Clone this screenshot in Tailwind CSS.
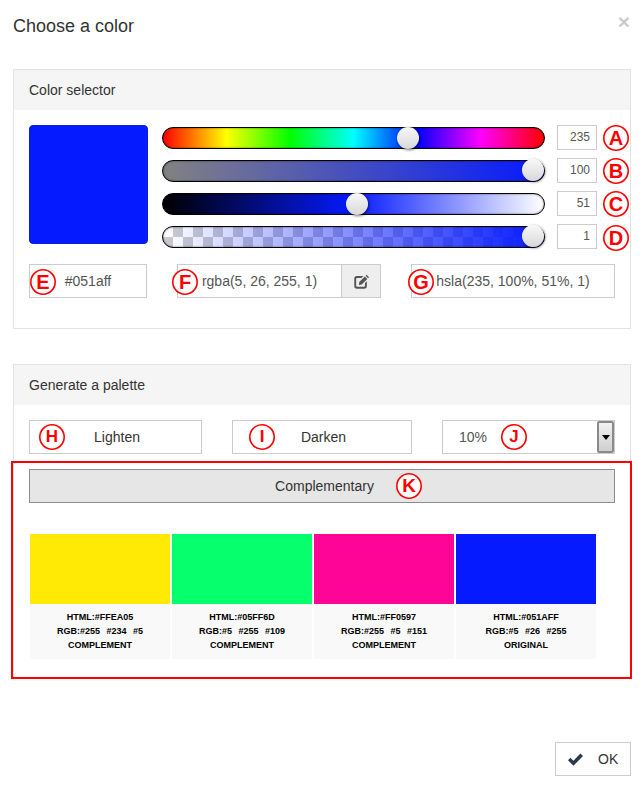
<!DOCTYPE html>
<html lang="en">
<head>
    <meta charset="UTF-8">
    <meta name="viewport" content="width=device-width, initial-scale=1.0">
    <title>Choose a color</title>
    <script src="https://cdn.jsdelivr.net/npm/@tailwindcss/browser@4"></script>
</head>
<body class="bg-white">
    <div class="relative w-[643px] h-[790px] overflow-hidden font-['Liberation_Sans',Arial,sans-serif] text-sm text-[#333]">
        <!-- Modal header -->
        <div class="h-[69px] pl-[13px] pr-[12px] flex items-start justify-between">
            <h1 class="text-lg leading-[20px] mt-[16px]">Choose a color</h1>
            <span class="text-[21px] leading-[21px] font-bold text-[#ccc] mt-[11px] mr-[1px]">×</span>
        </div>

        <!-- Color selector panel -->
        <div class="ml-[13px] w-[618px] border border-[#e3e3e3]">
            <div class="h-[40px] bg-[#f5f5f5] pl-[15px] flex items-center">Color selector</div>
            <div class="p-[15px] pb-[30px]">
                <div class="flex h-[124px]">
                    <div class="w-[119px] h-[119px] rounded bg-[#051aff] border border-[#0a1fd8]"></div>
                    <div class="ml-[14px] flex flex-col gap-2">
                        <div class="flex h-[25px]">
                            <div class="relative mt-[2px] w-[383px] h-[22px] rounded-full border border-black shadow-[inset_0_0_2px_rgba(0,0,0,0.6)] bg-[linear-gradient(to_right,#f00,#ff0,#0f0,#0ff,#00f,#f0f,#f00)]">
                                <div class="absolute left-[234px] top-[-1px] size-[22px] rounded-full bg-gradient-to-b from-[#f8f8f8] to-[#d8d8d8] shadow-[1px_1px_3px_rgba(0,0,0,0.55)]"></div>
                            </div>
                            <div class="ml-[12px] w-[40px] h-[25px] border border-[#ccc] text-xs text-[#555] text-right pr-[6px] leading-[23px]">235</div>
                        </div>
                        <div class="flex h-[25px]">
                            <div class="relative mt-[2px] w-[383px] h-[22px] rounded-full border border-black shadow-[inset_0_0_2px_rgba(0,0,0,0.6)] bg-[linear-gradient(to_right,#828282,#051aff)]">
                                <div class="absolute left-[359px] top-[-2px] size-[22px] rounded-full bg-gradient-to-b from-[#f8f8f8] to-[#d8d8d8] shadow-[1px_1px_3px_rgba(0,0,0,0.55)]"></div>
                            </div>
                            <div class="ml-[12px] w-[40px] h-[25px] border border-[#ccc] text-xs text-[#555] text-right pr-[6px] leading-[23px]">100</div>
                        </div>
                        <div class="flex h-[25px]">
                            <div class="relative mt-[2px] w-[383px] h-[22px] rounded-full border border-black shadow-[inset_0_0_2px_rgba(0,0,0,0.6)] bg-[linear-gradient(to_right,#000,#051aff_50%,#fff)]">
                                <div class="absolute left-[183px] top-[-1px] size-[22px] rounded-full bg-gradient-to-b from-[#f8f8f8] to-[#d8d8d8] shadow-[1px_1px_3px_rgba(0,0,0,0.55)]"></div>
                            </div>
                            <div class="ml-[12px] w-[40px] h-[25px] border border-[#ccc] text-xs text-[#555] text-right pr-[6px] leading-[23px]">51</div>
                        </div>
                        <div class="flex h-[25px]">
                            <div class="relative mt-[2px] w-[383px] h-[22px] rounded-full border border-black bg-[conic-gradient(#ccc_25%,#fff_0_50%,#ccc_0_75%,#fff_0)] bg-[length:20px_20px]">
                                <div class="h-full rounded-full shadow-[inset_0_0_2px_rgba(0,0,0,0.6)] bg-[linear-gradient(to_right,transparent,#051aff)]"></div>
                                <div class="absolute left-[359px] top-[-2px] size-[22px] rounded-full bg-gradient-to-b from-[#f8f8f8] to-[#d8d8d8] shadow-[1px_1px_3px_rgba(0,0,0,0.55)]"></div>
                            </div>
                            <div class="ml-[12px] w-[40px] h-[25px] border border-[#ccc] text-xs text-[#555] text-right pr-[6px] leading-[23px]">1</div>
                        </div>
                    </div>
                </div>
                <div class="mt-[15px] flex gap-[30px] text-[#555]">
                    <div class="w-[118px] h-[34px] border border-[#ccc] flex items-center justify-center">#051aff</div>
                    <div class="flex">
                        <div class="w-[165px] h-[34px] border border-[#ccc] flex items-center justify-center">rgba(5, 26, 255, 1)</div>
                        <div class="w-[39px] h-[34px] border border-l-0 border-[#ccc] bg-[#eee] flex items-center justify-center">
                            <svg class="size-[15px]" viewBox="0 0 16 16" fill="#555">
                                <path d="M3.2 2.2H10L8 4.2H3.4a1.1 1.1 0 0 0-1.1 1.1v7.2a1.1 1.1 0 0 0 1.1 1.1h7.2a1.1 1.1 0 0 0 1.1-1.1V9.6l2-2v5.2A3 3 0 0 1 10.8 15.8H3.2A3 3 0 0 1 .3 12.8V5.2a3 3 0 0 1 2.9-3z"/>
                                <path d="M5.6 8.6 11.6 2.6 14.2 5.2 8.2 11.2 5.2 11.8zM12.4 1.8 13.4.8 16 3.4 15 4.4z"/>
                            </svg>
                        </div>
                    </div>
                    <div class="w-[204px] h-[34px] border border-[#ccc] flex items-center justify-center">hsla(235, 100%, 51%, 1)</div>
                </div>
            </div>
        </div>

        <!-- Generate a palette panel -->
        <div class="mt-[35px] ml-[13px] w-[618px] border border-[#e3e3e3]">
            <div class="h-[40px] bg-[#f5f5f5] pl-[15px] flex items-center">Generate a palette</div>
            <div class="pt-[15px] px-[15px] pb-[18px]">
                <div class="flex gap-[30px]">
                    <div class="w-[173px] h-[34px] border border-[#ccc] pl-[3px] flex items-center justify-center">Lighten</div>
                    <div class="w-[180px] h-[34px] border border-[#ccc] pl-[3px] flex items-center justify-center">Darken</div>
                    <div class="w-[173px] h-[34px] border border-[#ccc] pl-[16px] flex items-center justify-between text-[#555]">
                        10%
                        <div class="w-[17px] h-[32px] border-2 border-[#8a8a8a] rounded-[2px] bg-gradient-to-b from-[#f2f2f2] to-[#cfcfcf] flex items-center justify-center">
                            <div class="w-0 h-0 border-x-[4px] border-x-transparent border-t-[5px] border-t-black"></div>
                        </div>
                    </div>
                </div>
                <div class="mt-[15px] h-[34px] bg-[#e6e6e6] border border-[#8c8c8c] pl-[5px] flex items-center justify-center">Complementary</div>
                <div class="mt-[31px] ml-[1px] flex gap-[2px] text-[9px] leading-[14px] font-bold text-black text-center [word-spacing:0.7px]">
                    <div class="w-[140px] bg-[#f9f9f9]">
                        <div class="h-[70px] bg-[#ffea05]"></div>
                        <div class="pt-[6px] pb-[7px]">HTML:#FFEA05<br>RGB:#255&nbsp; #234&nbsp; #5<br>COMPLEMENT</div>
                    </div>
                    <div class="w-[140px] bg-[#f9f9f9]">
                        <div class="h-[70px] bg-[#05ff6d]"></div>
                        <div class="pt-[6px] pb-[7px]">HTML:#05FF6D<br>RGB:#5&nbsp; #255&nbsp; #109<br>COMPLEMENT</div>
                    </div>
                    <div class="w-[140px] bg-[#f9f9f9]">
                        <div class="h-[70px] bg-[#ff0597]"></div>
                        <div class="pt-[6px] pb-[7px]">HTML:#FF0597<br>RGB:#255&nbsp; #5&nbsp; #151<br>COMPLEMENT</div>
                    </div>
                    <div class="w-[140px] bg-[#f9f9f9]">
                        <div class="h-[70px] bg-[#051aff]"></div>
                        <div class="pt-[6px] pb-[7px]">HTML:#051AFF<br>RGB:#5&nbsp; #26&nbsp; #255<br>ORIGINAL</div>
                    </div>
                </div>
            </div>
        </div>

        <!-- Footer -->
        <div class="mt-[64px] mr-[12px] flex justify-end">
            <div class="w-[76px] h-[34px] border border-[#ccc] flex items-center pl-[12px] gap-[15px]">
                <svg class="w-[15px] h-[13px]" viewBox="0 0 15 13" fill="#2b3a4a">
                    <path d="M0 7.2 2.4 4.8 5.4 7.8 12.4.6 15 3 5.4 12.8z"/>
                </svg>
                <span>OK</span>
            </div>
        </div>

        <!-- Annotations drawn over the screenshot -->
        <div class="absolute left-[11px] top-[461px] w-[621px] h-[218px] border-2 border-[#f00]"></div>
        <div class="absolute left-[603px] top-[125px] size-[26px] rounded-full shadow-[inset_0_0_0_1.6px_#f00] bg-white text-[#f00] font-bold text-[20px] flex items-center justify-center">A</div>
        <div class="absolute left-[603px] top-[158px] size-[26px] rounded-full shadow-[inset_0_0_0_1.6px_#f00] bg-white text-[#f00] font-bold text-[20px] flex items-center justify-center">B</div>
        <div class="absolute left-[603px] top-[191px] size-[26px] rounded-full shadow-[inset_0_0_0_1.6px_#f00] bg-white text-[#f00] font-bold text-[20px] flex items-center justify-center">C</div>
        <div class="absolute left-[603px] top-[225px] size-[26px] rounded-full shadow-[inset_0_0_0_1.6px_#f00] bg-white text-[#f00] font-bold text-[20px] flex items-center justify-center">D</div>
        <div class="absolute left-[30px] top-[269px] size-[26px] rounded-full shadow-[inset_0_0_0_1.6px_#f00] bg-white text-[#f00] font-bold text-[20px] flex items-center justify-center">E</div>
        <div class="absolute left-[172px] top-[269px] size-[26px] rounded-full shadow-[inset_0_0_0_1.6px_#f00] bg-white text-[#f00] font-bold text-[20px] flex items-center justify-center">F</div>
        <div class="absolute left-[408px] top-[269px] size-[26px] rounded-full shadow-[inset_0_0_0_1.6px_#f00] bg-white text-[#f00] font-bold text-[20px] flex items-center justify-center">G</div>
        <div class="absolute left-[39px] top-[424px] size-[26px] rounded-full shadow-[inset_0_0_0_1.6px_#f00] bg-white text-[#f00] font-bold text-[17px] flex items-center justify-center">H</div>
        <div class="absolute left-[249px] top-[424px] size-[26px] rounded-full shadow-[inset_0_0_0_1.6px_#f00] bg-white text-[#f00] font-bold text-[17px] flex items-center justify-center">I</div>
        <div class="absolute left-[501px] top-[424px] size-[26px] rounded-full shadow-[inset_0_0_0_1.6px_#f00] bg-white text-[#f00] font-bold text-[17px] flex items-center justify-center">J</div>
        <div class="absolute left-[396px] top-[473px] size-[26px] rounded-full shadow-[inset_0_0_0_1.6px_#f00] bg-white text-[#f00] font-bold text-[19px] flex items-center justify-center">K</div>
    </div>
</body>
</html>
